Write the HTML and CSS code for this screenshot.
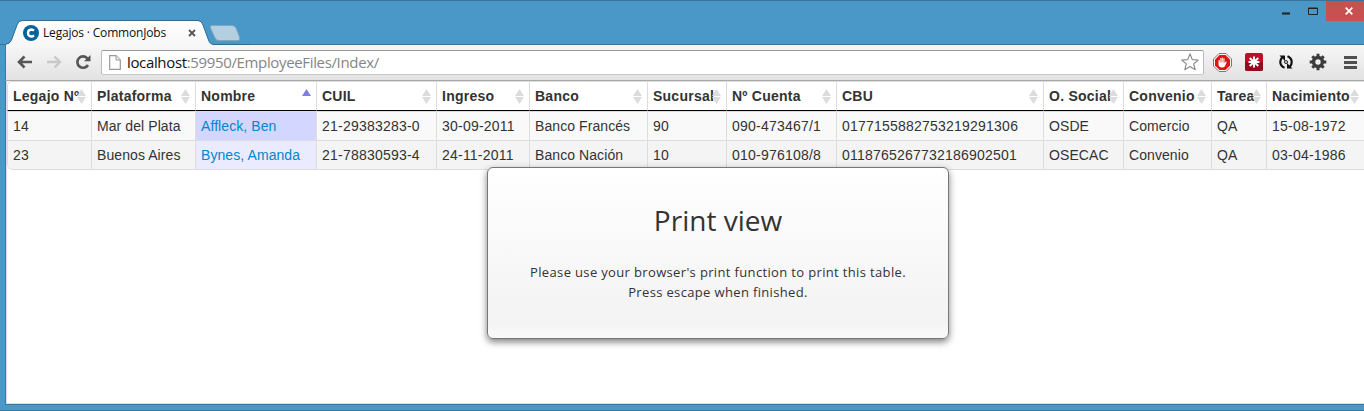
FILE: index.html
```html
<!DOCTYPE html>
<html lang="es">
<head>
<meta charset="utf-8">
<title>Legajos · CommonJobs</title>
<link rel="stylesheet" href="styles.css">
</head>
<body>
<div class="window">
  <header class="titlebar">
    <svg class="tab-shapes" width="250" height="45" viewBox="0 0 250 45">
      <defs><linearGradient id="tabfill" x1="0" y1="0" x2="0" y2="1"><stop offset="0" stop-color="#fff"/><stop offset="1" stop-color="#f7f7f7"/></linearGradient></defs>
      <path d="M5 45 V44.5 Q10 44 11.500 40 L17 25 Q18.500 21 22 21 H198 Q201.500 21 203 25 L208.500 40 Q210 44.500 214 44.500 V45Z" fill="url(#tabfill)"/>
      <path d="M5 44.5 Q10 44 11.500 40 L17 25 Q18.500 20.500 22 20.500 H198 Q201.500 20.500 203 25 L208.500 40 Q210 44.500 214 44.500 H250" fill="none" stroke="#2f6a94"/>
      <path d="M212 25.500 H232 Q235 25.500 236 28 L239.500 37 Q240.500 40.500 238 40.500 H219 Q216 40.500 215 38 L210.500 28 Q209.500 25.500 212 25.500Z" fill="#b4cfdf" stroke="#79a8c5"/>
    </svg>
    <div class="tab">
      <svg width="16" height="16" viewBox="0 0 16 16"><circle cx="8" cy="8" r="8" fill="#02639b"/><path d="M11 5.700 Q9.700 4.500 8.300 4.500 Q5 4.700 5 8 Q5 11.300 8.300 11.500 Q9.700 11.500 11 10.300" fill="none" stroke="#fff" stroke-width="2.300"/></svg>
      <span class="tab-title">Legajos · CommonJobs</span>
      <svg width="8" height="8" viewBox="0 0 8 8"><path d="M1 1 L7 7 M7 1 L1 7" stroke="#555" stroke-width="1.800"/></svg>
    </div>
    <div class="controls">
      <svg width="8" height="3"><path d="M0 1.500H8" stroke="#222" stroke-width="2"/></svg>
      <svg width="10" height="8"><path d="M.5 1H9.500V7.500H.5Z M0 1.500H10" fill="none" stroke="#222"/></svg>
      <span class="close"><svg width="8" height="8" viewBox="0 0 8 8"><path d="M.7.7 L7.300 7.300 M7.300.7 L.7 7.300" stroke="#fff" stroke-width="1.700"/></svg></span>
    </div>
  </header>
  <nav class="toolbar">
    <svg width="16" height="14" viewBox="0 0 16 14"><path d="M7.500 1.500 L2 7 L7.500 12.500 M2 7 H15" fill="none" stroke="#555" stroke-width="2.600"/></svg>
    <svg class="forward" width="16" height="14" viewBox="0 0 16 14"><path d="M8.500 1.500 L14 7 L8.500 12.500 M14 7 H1" fill="none" stroke="#c8c8c8" stroke-width="2.400"/></svg>
    <svg class="reload" width="16" height="16" viewBox="0 0 16 16"><path d="M13 11 A5.700 5.700 0 1 1 12.500 4.500" fill="none" stroke="#555" stroke-width="2.600"/><path d="M15.500 1 V7.200 H9Z" fill="#555"/></svg>
    <div class="address">
      <svg width="12" height="15" viewBox="0 0 12 15"><path d="M.7.7 H7 L11.300 5 V14.300 H.7Z" fill="#fff" stroke="#999" stroke-width="1.200"/><path d="M7 .7 V5 H11.300" fill="#eee" stroke="#999"/></svg>
      <span class="url"><span class="host">localhost</span>:59950/EmployeeFiles/Index/</span>
      <svg width="18" height="18" viewBox="0 0 18 18"><path d="M9 .9 L11.300 6.600 17.200 7 12.700 10.900 14.200 16.800 9 13.600 3.800 16.800 5.300 10.900 .8 7 6.700 6.600Z" fill="#fff" stroke="#8c8c8c" stroke-width="1.200" stroke-linejoin="round"/></svg>
    </div>
    <svg class="ext-stop" width="19" height="19" viewBox="0 0 19 19"><path d="M6 .5 H13 L18.500 6 V13 L13 18.500 H6 L.5 13 V6Z" fill="#fff" stroke="#777"/><path d="M6.500 2 H12.500 L17 6.500 V12.500 L12.500 17 H6.500 L2 12.500 V6.500Z" fill="#dc1515"/><path d="M5.500 12 V7.500 Q6.200 6.300 7 7.500 V9.500 V5.500 Q7.800 4.300 8.500 5.500 V9 V5 Q9.300 3.800 10 5 V9 V5.700 Q10.800 4.500 11.500 5.700 V10 L13 8.500 Q14 8.500 13.600 9.600 L12 13 Q11.300 14.500 9 14.500 Q6 14.500 5.500 12Z" fill="#fff"/><path d="M7.250 6V9.500 M8.750 5V9.500 M10.250 5V9.500" stroke="#dc1515" stroke-width=".5"/></svg>
    <svg class="ext-pass" width="18" height="18" viewBox="0 0 18 18"><rect width="18" height="18" rx="2" fill="#bd1028"/><path d="M0 9H18V16Q18 18 16 18H2Q0 18 0 16Z" fill="#98081f"/><path d="M9 3.500V14.500 M3.500 9H14.500 M4.700 5L13.300 13 M13.300 5L4.700 13" stroke="#fff" stroke-width="2"/></svg>
    <svg class="ext-sync" width="16" height="16" viewBox="0 0 16 16"><path d="M6.500 13.800 Q2.300 12 2.300 8 Q2.300 5.500 4 3.500 M9.500 2.200 Q13.700 4 13.700 8 Q13.700 10.500 12 12.500" fill="none" stroke="#111" stroke-width="2.200"/><path d="M1.500 1.500H7V7Z M14.500 14.500H9V9Z" fill="#111"/><circle cx="8" cy="8" r="1.500" fill="none" stroke="#222"/></svg>
    <svg class="ext-gear" width="18" height="18" viewBox="0 0 18 18"><path d="M9 .7V17.300 M.7 9H17.300 M3.300 3.300L14.700 14.700 M14.700 3.300L3.300 14.700" stroke="#3b3b3b" stroke-width="3"/><circle cx="9" cy="9" r="4.500" fill="none" stroke="#3b3b3b" stroke-width="3.400"/><circle cx="9" cy="9" r="2.700" fill="#eee"/></svg>
    <svg class="menu" width="13" height="13" viewBox="0 0 13 13"><path d="M0 1.500H13M0 6.500H13M0 11.500H13" stroke="#505050" stroke-width="3"/></svg>
  </nav>
  <main class="page">
    <table class="grid">
      <colgroup><col class="w84"><col class="w104"><col class="w121"><col class="w120"><col class="w93"><col class="w118"><col class="w79"><col class="w110"><col class="w207"><col class="w80"><col class="w88"><col class="w55"><col class="w98"></colgroup>
      <thead><tr><th>Legajo Nº</th><th>Plataforma</th><th class="sorted">Nombre</th><th>CUIL</th><th>Ingreso</th><th>Banco</th><th>Sucursal</th><th>Nº Cuenta</th><th>CBU</th><th>O. Social</th><th>Convenio</th><th>Tarea</th><th>Nacimiento</th></tr></thead>
      <tbody>
        <tr><td class="num">14</td><td>Mar del Plata</td><td class="name">Affleck, Ben</td><td class="num">21-29383283-0</td><td class="num">30-09-2011</td><td>Banco Francés</td><td class="num">90</td><td class="num">090-473467/1</td><td class="num">0177155882753219291306</td><td>OSDE</td><td>Comercio</td><td>QA</td><td class="num">15-08-1972</td></tr>
        <tr><td class="num">23</td><td>Buenos Aires</td><td class="name">Bynes, Amanda</td><td class="num">21-78830593-4</td><td class="num">24-11-2011</td><td>Banco Nación</td><td class="num">10</td><td class="num">010-976108/8</td><td class="num">0118765267732186902501</td><td>OSECAC</td><td>Convenio</td><td>QA</td><td class="num">03-04-1986</td></tr>
      </tbody>
    </table>
    <div class="print-info">
      <h1>Print view</h1>
      <p>Please use your browser's print function to print this table.<br>Press escape when finished.</p>
    </div>
  </main>
</div>
</body>
</html>
```
FILE: styles.css
```css
* { box-sizing: border-box; }
body { margin: 0; overflow: hidden; font-family: "Liberation Sans", Arial, sans-serif; }
svg { display: block; flex: none; }
.window { width: 1364px; height: 411px; background: #4a98c7; border-top: 1px solid #397399; border-bottom: 1px solid #39789f; padding-bottom: 5px; display: flex; flex-direction: column; }
.titlebar { height: 44px; flex: none; display: flex; justify-content: space-between; position: relative; border-bottom: 1px solid #36749c; }
.tab-shapes { position: absolute; left: 0; top: -1px; }
.tab { position: relative; display: flex; align-items: center; height: 16px; margin: 24px 0 0 23px; width: 173px; }
.tab-title { font: 12px/16px "Open Sans", sans-serif; letter-spacing: -.18px; color: #111; margin-left: 4px; flex: 1; white-space: nowrap; }
.controls { display: flex; height: 20px; align-items: center; }
.controls > svg:first-child { margin: 5px 18px 0 0; }
.controls > svg:nth-child(2) { margin-right: 8px; }
.close { width: 38px; height: 20px; background: #c75050; display: flex; align-items: center; padding-left: 19px; }
.toolbar { height: 36px; flex: none; margin-left: 5px; border-left: 1px solid #397aa5; border-bottom: 1px solid #a7a7a7; background: linear-gradient(#f7f7f7, #e2e2e2); display: flex; align-items: center; padding: 0 0 1px 11px; }
.forward { margin-left: 13px; }
.reload { margin-left: 13px; }
.address { width: 1103px; height: 25px; margin-left: 10px; border: 1px solid #aaa; border-color: #999 #bbb #c8c8c8; border-radius: 2px; background: #fff; display: flex; align-items: center; padding: 0 4px 0 7px; }
.url { flex: 1; margin-left: 6px; font: 15px/22px "Open Sans", sans-serif; letter-spacing: -.35px; color: #858585; white-space: nowrap; }
.host { color: #111; }
.ext-stop { margin-left: 9px; }
.ext-pass { margin-left: 13px; }
.ext-sync { margin-left: 15px; }
.ext-gear { margin-left: 15px; }
.menu { margin-left: 17px; }
.page { flex: 1; position: relative; margin-left: 5px; background: #fff; border-left: 1px solid #397aa5; border-bottom: 1px solid #34749d; box-shadow: inset 1px -1px #ddd; overflow: hidden; }
.grid { margin-left: 1px; width: 1357px; table-layout: fixed; border-collapse: separate; border-spacing: 0; border-radius: 5px 0 0 5px; border-bottom: 1px solid #ddd; font-size: 14px; line-height: 20px; color: #333; }
th, td { padding: 4px 0 4px 5px; text-align: left; white-space: nowrap; border-left: 1px solid #ddd; border-top: 1px solid #ddd; }
th { position: relative; height: 30px; border-bottom: 1px solid #000; letter-spacing: .24px; background: #fff; }
td { height: 29px; background: #f9f9f9; letter-spacing: .08px; }
tbody tr:nth-child(2) td { background: #f4f4f4; }
th:first-child { border-top-left-radius: 5px; }
tr:last-child td:first-child { border-bottom-left-radius: 5px; }
td.num { letter-spacing: .22px; }
td.name { color: #08c; background: #d3d6ff; }
tbody tr:nth-child(2) td.name { background: #eaebff; }
th::before, th::after { content: ""; position: absolute; right: 5px; width: 9px; height: 7px; background: #dcdcdc; }
th::before { top: 7px; clip-path: polygon(50% 0, 100% 100%, 0 100%); }
th::after { top: 15px; clip-path: polygon(0 0, 100% 0, 50% 100%); }
th.sorted::before { background: #8080df; }
th.sorted::after { display: none; }
.w84 { width: 84px; } .w104 { width: 104px; } .w121 { width: 121px; } .w120 { width: 120px; } .w93 { width: 93px; } .w118 { width: 118px; } .w79 { width: 79px; } .w110 { width: 110px; } .w207 { width: 207px; } .w80 { width: 80px; } .w88 { width: 88px; } .w55 { width: 55px; } .w98 { width: 98px; }
.print-info { position: absolute; left: 481px; top: 86px; width: 462px; height: 172px; border: 1px solid #777; border-radius: 6px; background: linear-gradient(#fff, #f3f3f3 89%, #f9f9f9); box-shadow: 0 3px 7px rgba(0,0,0,.5); text-align: center; color: #333; font-family: "Open Sans", sans-serif; }
h1 { margin: 32px 0 0; font-size: 28px; line-height: 40px; font-weight: 400; }
p { margin: 22px 0 0; font-size: 13px; line-height: 20px; letter-spacing: .35px; }
```
